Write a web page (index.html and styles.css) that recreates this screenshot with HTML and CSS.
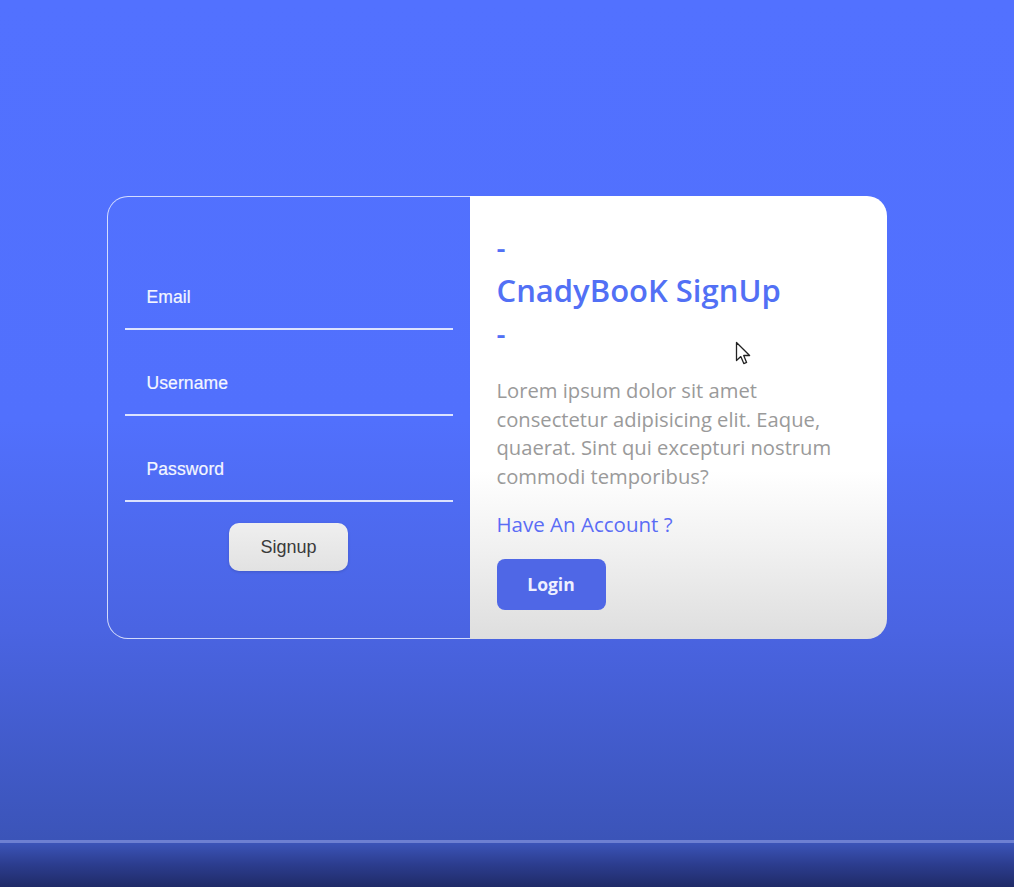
FILE: index.html
```html
<!DOCTYPE html>
<html lang="en">
<head>
<meta charset="utf-8">
<title>CnadyBooK SignUp</title>
<link rel="stylesheet" href="styles.css">
</head>
<body>
<main class="stage">
  <section class="card">
    <form class="form-panel">
      <div class="field"><span class="field-label">Email</span></div>
      <div class="field"><span class="field-label">Username</span></div>
      <div class="field"><span class="field-label">Password</span></div>
      <div class="actions"><button type="button" class="btn-signup">Signup</button></div>
    </form>
    <div class="info-panel">
      <h1 class="title"><span class="dash">-</span><span>CnadyBooK SignUp</span><span class="dash">-</span></h1>
      <p class="lead">Lorem ipsum dolor sit amet consectetur adipisicing elit. Eaque, quaerat. Sint qui excepturi nostrum commodi temporibus?</p>
      <p class="have">Have An Account ?</p>
      <button type="button" class="btn-login">Login</button>
      <svg class="cursor" width="18" height="26" viewBox="0 0 18 26"><path d="M1.5 1.5 L1.5 19.5 L5.8 15.6 L8.8 22.6 L11.6 21.4 L8.7 14.5 L14.6 14.5 Z" fill="#fff" stroke="#222" stroke-width="1.3" stroke-linejoin="round"/></svg>
    </div>
  </section>
</main>
<div class="player-bar"></div>
</body>
</html>
```
FILE: styles.css
```css
html, body {
  margin: 0;
  padding: 0;
}
body {
  width: 1014px;
  height: 887px;
  overflow: hidden;
  background: #1b2357;
  font-family: "Liberation Sans", Arial, sans-serif;
}
.stage {
  height: 840px;
  background: linear-gradient(180deg, #5271ff 0%, #5170fd 50%, #4a64e2 75%, #3b54b8 100%);
  display: flex;
  justify-content: center;
  align-items: flex-start;
  padding-top: 196px;
  box-sizing: border-box;
}
.card {
  display: flex;
  width: 780px;
  height: 443px;
  margin-left: -21px;
  border-radius: 21px;
  position: relative;
}
.form-panel {
  width: 363px;
  box-sizing: border-box;
  border: 1px solid rgba(235, 240, 255, 0.85);
  border-right: none;
  border-radius: 21px 0 0 21px;
  padding: 47px 17px 0 17px;
  margin: 0;
  display: flex;
  flex-direction: column;
}
.field {
  height: 86px;
  box-sizing: border-box;
  border-bottom: 2px solid rgba(235, 240, 255, 0.9);
  display: flex;
  align-items: flex-end;
  padding: 0 0 21px 22px;
}
.field-label {
  color: #f4f6ff;
  font-size: 17.5px;
  line-height: 20px;
  letter-spacing: 0.1px;
  -webkit-text-stroke: 0.2px #f4f6ff;
}
.actions {
  display: flex;
  justify-content: center;
  padding-top: 21px;
}
.btn-signup {
  width: 119px;
  height: 48px;
  border: none;
  border-radius: 10px;
  background: linear-gradient(180deg, #efefef, #e2e2e2);
  color: #3a3a3a;
  font-family: "Liberation Sans", Arial, sans-serif;
  font-size: 18px;
  box-shadow: 0 1px 3px rgba(0,0,0,0.15);
}
.info-panel {
  flex: 1;
  background: linear-gradient(180deg, #ffffff 0%, #ffffff 62%, #f2f2f2 78%, #dedede 100%);
  border-radius: 0 20px 20px 0;
  padding: 30px 20px 0 27px;
  display: flex;
  flex-direction: column;
  align-items: flex-start;
  position: relative;
  font-family: "Open Sans", "Noto Sans", sans-serif;
}
.title {
  margin: 0;
  display: flex;
  flex-direction: column;
  color: #5270f5;
  font-size: 31px;
  font-weight: 600;
  line-height: 43px;
  letter-spacing: 0;
}
.dash {
  font-weight: 600;
  font-size: 28px;
}
.lead {
  margin: 21px 0 0 0;
  width: 355px;
  color: #9a9a9a;
  font-size: 20.2px;
  line-height: 28.7px;
}
.have {
  margin: 20px 0 0 0;
  color: #5a6cf5;
  font-size: 20.5px;
  line-height: 26px;
}
.btn-login {
  margin-top: 22px;
  width: 109px;
  height: 51px;
  border: none;
  border-radius: 8px;
  background: #4f67e6;
  color: #eef0ff;
  font-family: "Open Sans", "Noto Sans", sans-serif;
  font-weight: 700;
  font-size: 17.5px;
}
.cursor {
  position: absolute;
  left: 265px;
  top: 145px;
}
.player-bar {
  height: 47px;
  border-top: 3px solid #6d80d2;
  background: linear-gradient(180deg, #3b54b8 0%, #2c3d8f 45%, #1f2a66 95%, #111522 100%);
}
```
